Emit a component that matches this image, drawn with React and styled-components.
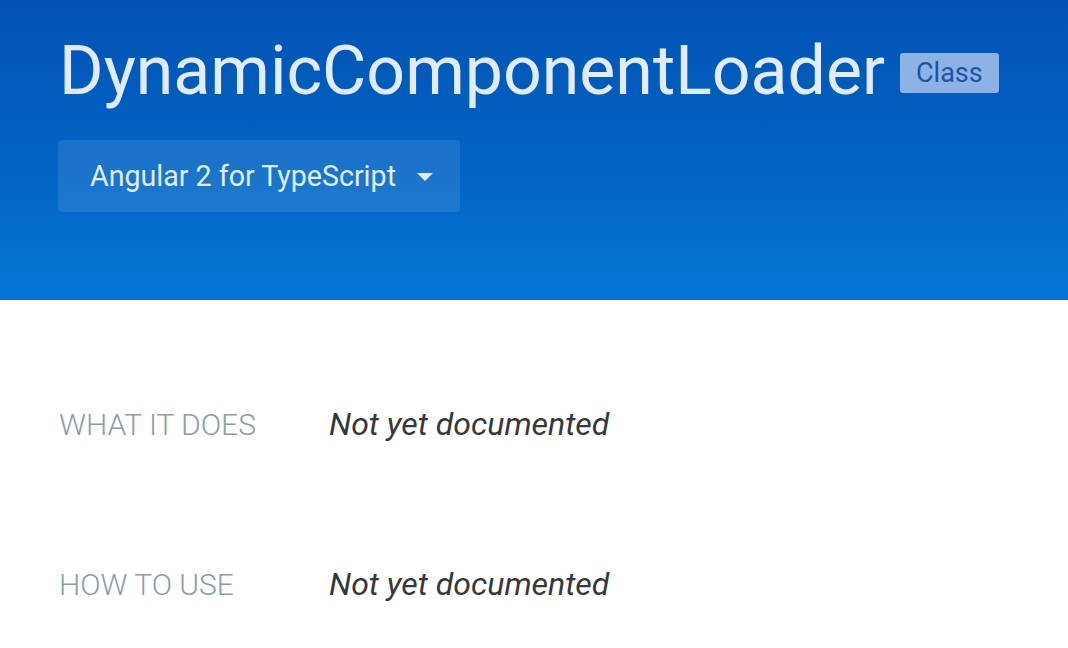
import React from "react";
import styled, { createGlobalStyle } from "styled-components";

const Global = createGlobalStyle`
  html, body { margin: 0; padding: 0; background: #fff; }
  body { font-family: Roboto, "Noto Sans", sans-serif; }
`;

const Hero = styled.header`
  height: 300px;
  box-sizing: border-box;
  padding: 30px 58px 0 58px;
  background: linear-gradient(180deg, #0252b3 0%, #0365c6 60%, #0477d6 100%);
`;

const TitleRow = styled.div`
  display: flex;
  align-items: center;
  gap: 15px;
`;

const Title = styled.h1`
  margin: 0;
  font-family: Roboto, sans-serif;
  font-weight: 400;
  font-size: 68px;
  line-height: 82px;
  color: #e1ecfa;
  padding-left: 1px;
`;

const Badge = styled.span`
  display: inline-flex;
  align-items: center;
  justify-content: center;
  height: 40px;
  padding: 0 16px;
  margin-top: 4px;
  border-radius: 3px;
  background: #8db3e4;
  color: #1b55aa;
  font-size: 27px;
`;

const Select = styled.button`
  margin-top: 28px;
  display: inline-flex;
  align-items: center;
  gap: 21px;
  height: 72px;
  width: 402px;
  box-sizing: border-box;
  padding: 0 26px 0 32px;
  border: none;
  border-radius: 4px;
  background: rgba(255, 255, 255, 0.1);
  color: #e1ecfa;
  font-family: Roboto, sans-serif;
  font-size: 28.6px;
  cursor: pointer;
`;

const Caret = styled.span`
  width: 0;
  height: 0;
  border-left: 8px solid transparent;
  border-right: 8px solid transparent;
  border-top: 8px solid #dbe8f8;
  margin-top: 2px;
`;

const Content = styled.main`
  padding: 100px 58px 0 59px;
  display: flex;
  flex-direction: column;
  gap: 111px;
`;

const Row = styled.section`
  display: grid;
  grid-template-columns: 270px 1fr;
  align-items: baseline;
`;

const Label = styled.h2`
  margin: 0;
  font-weight: 300;
  font-size: 30px;
  line-height: 48px;
  color: #8a9da8;
  text-transform: uppercase;
`;

const Value = styled.p`
  margin: 0;
  font-style: italic;
  font-size: 32px;
  line-height: 48px;
  color: #35383b;
`;

export default function App() {
  const rows = [
    { label: "What it does", value: "Not yet documented" },
    { label: "How to use", value: "Not yet documented" },
  ];
  return (
    <>
      <Global />
      <Hero>
        <TitleRow>
          <Title>DynamicComponentLoader</Title>
          <Badge>Class</Badge>
        </TitleRow>
        <Select>
          Angular 2 for TypeScript
          <Caret />
        </Select>
      </Hero>
      <Content>
        {rows.map((r) => (
          <Row key={r.label}>
            <Label>{r.label}</Label>
            <Value>{r.value}</Value>
          </Row>
        ))}
      </Content>
    </>
  );
}
